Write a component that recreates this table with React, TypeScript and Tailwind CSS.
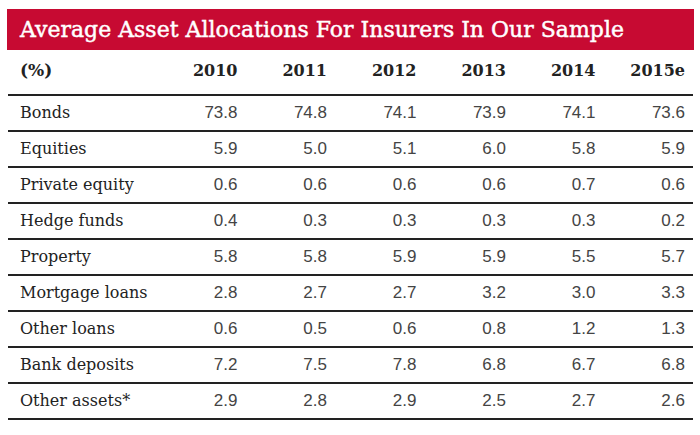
const years = ["2010", "2011", "2012", "2013", "2014", "2015e"];

const rows: [string, string[]][] = [
  ["Bonds", ["73.8", "74.8", "74.1", "73.9", "74.1", "73.6"]],
  ["Equities", ["5.9", "5.0", "5.1", "6.0", "5.8", "5.9"]],
  ["Private equity", ["0.6", "0.6", "0.6", "0.6", "0.7", "0.6"]],
  ["Hedge funds", ["0.4", "0.3", "0.3", "0.3", "0.3", "0.2"]],
  ["Property", ["5.8", "5.8", "5.9", "5.9", "5.5", "5.7"]],
  ["Mortgage loans", ["2.8", "2.7", "2.7", "3.2", "3.0", "3.3"]],
  ["Other loans", ["0.6", "0.5", "0.6", "0.8", "1.2", "1.3"]],
  ["Bank deposits", ["7.2", "7.5", "7.8", "6.8", "6.7", "6.8"]],
  ["Other assets*", ["2.9", "2.8", "2.9", "2.5", "2.7", "2.6"]],
];

const serif = "font-['DejaVu_Serif','Liberation_Serif',serif]";

export default function App() {
  return (
    <div className={`w-[700px] h-[435px] bg-white pt-[9px] ${serif}`}>
      {/* title bar */}
      <div className="ml-[7px] w-[687px] h-[41px] bg-[#c70a32] flex items-center pl-[13px]">
        <h1 className="text-white text-[22px] leading-none [-webkit-text-stroke:0.45px_white]">
          Average Asset Allocations For Insurers In Our Sample
        </h1>
      </div>

      {/* table */}
      <div className="ml-[8px] w-[685px] text-[#222]">
        <div className="grid grid-cols-[140px_repeat(6,89.5px)] h-[46px] items-center border-b-2 border-[#222] pb-[2px] font-bold text-[16px]">
          <div className="pl-[12px] text-[17px]">(%)</div>
          {years.map(y => (
            <div key={y} className="text-right">{y}</div>
          ))}
        </div>

        {rows.map(([label, vals]) => (
          <div
            key={label}
            className="grid grid-cols-[140px_repeat(6,89.5px)] h-[36px] items-center border-b-2 border-[#222] text-[16px]"
          >
            <div className="pl-[12px] whitespace-nowrap">{label}</div>
            {vals.map((v, i) => (
              <div key={i} className="text-right text-[#444] text-[17px] font-['Liberation_Sans',Arial,sans-serif]">
                {v}
              </div>
            ))}
          </div>
        ))}
      </div>
    </div>
  );
}
